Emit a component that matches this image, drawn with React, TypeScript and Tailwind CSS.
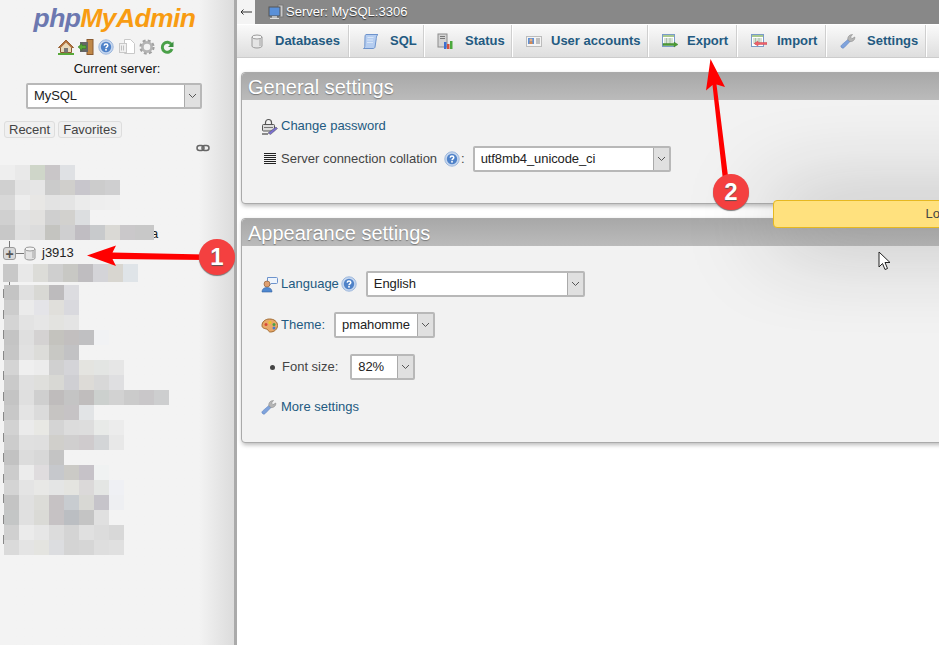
const topRows = [
  ["#eeeeee", "#e9e9e9", "#cfd6c9", "#c9c6c8", "#dfe1e4"],
  ["#d0d0d0", "#e4e4e4", "#e6e6e6", "#cbcbcb", "#d0cfcc", "#c8c6cc", "#cccccc", "#cfcfd0"],
  ["#d8d8d8", "#ededed", "#e8e7e5", "#e3e3e3", "#e4e4e4", "#ebebeb", "#eeeeee", "#efefef"],
  ["#d0d0d0", "#e2e2e2", "#e2e1df", "#cfcfcf", "#d2d1ce", "#dcdee0"],
  ["#c8c8c8", "#e0e0e0", "#dcdcdc", "#c4c4c0", "#cfcfd0", "#c0bdc2", "#c8cacc", "#dad9d5", "#cac8ca", "#c8c8c8"],
];

const midRow = ["#c8c8c8", "#e8e8e8", "#dcdcd8", "#cfcfcf", "#c8c8c4", "#bfbdc0", "#d4d4d8", "#d8d6d0", "#dfe4e8"];

const bottomRows = [
  ["#c4c4c4", "#e0e0e0", "#d8d8d4", "#bdbbbd", "#dcdce0"],
  ["#cccccc", "#ebebeb", "#e4e4e8", "#e0dfdb", "#d9d9de"],
  ["#d4d4d4", "#e3e3e3", "#e6e6e6", "#e3e3e0", "#e4e4e4"],
  ["#c4c4c4", "#dfdfdf", "#d4d2d2", "#c4c3be", "#c2bfbf", "#c0c0c2", "#f1f2f4"],
  ["#c6c6c6", "#e1e1e1", "#dcdcd9", "#c8c8c4", "#c2c2c4"],
  ["#d4d4d4", "#efefef", "#ececec", "#d0d0d0", "#d4d4d8", "#e4e4e0", "#e3e5e3", "#e6e6e6"],
  ["#cacaca", "#e0e0e0", "#dfdfdc", "#d8d8d4", "#cfcfd3", "#dddbd7", "#d8d8d8", "#dfdfe1"],
  ["#c4c4c4", "#dfdfdf", "#cfcfcf", "#bfbcbc", "#c4c4c4", "#c0bdbd", "#ccd0ce", "#d2d2d2", "#cbcbcb", "#c9c7c9", "#cdcecf"],
  ["#c8c8c8", "#e4e4e4", "#dbdbdb", "#c6c4c2", "#c6c3c5", "#e2e4e6"],
  ["#d2d2d2", "#ebebeb", "#e8e8e4", "#d4d4d4", "#dcdcdc", "#dddddd", "#e8eae8", "#ececec"],
  ["#cccccc", "#e0e0e0", "#dfdfdf", "#d0cfcb", "#d0cfcf", "#cfcbcd", "#d3d5d7", "#e8e8e8"],
  ["#c2c2c2", "#dcdcdc", "#d8d8d8", "#c4c4c4"],
  ["#cccccc", "#ececec", "#dfdcde", "#c6c8cc", "#cbcac6", "#c6c2c8", "#f0f2f2"],
  ["#d4d4d4", "#e4e4e4", "#e8e8e6", "#e4e5e5", "#e4e4e0", "#dbd9d9", "#e4e6e4", "#eff0f4"],
  ["#c4c4c4", "#e0e0e0", "#dcdcd8", "#c6c2c4", "#c8ccd0", "#d8d8d4", "#c6c4ca", "#eeeff2"],
  ["#c4c6c6", "#e0e0e0", "#dadad6", "#c6c2c4", "#bbbec2", "#c4c4c4", "#e0e0e0"],
  ["#d0d0d0", "#ebebeb", "#e6e6e6", "#dcdcdc", "#d4d4d4", "#e0e0e0", "#dcdcdc", "#d8d8d8"],
  ["#dadada", "#e4e4e4", "#e4e4e0", "#dcdde0", "#d4d4d4", "#d6d6d6", "#dedede", "#e0e0e0"],
];

const Mosaic = ({ colors, tall }: { colors: string[]; tall?: boolean }) => (
  <div className={tall ? "flex h-[18px]" : "flex h-[15px]"}>
    {colors.map((c, i) => (
      <div key={i} className="w-[15px] shrink-0" style={{ backgroundColor: c }} />
    ))}
  </div>
);

const DbIcon = () => (
  <svg width="16" height="16" viewBox="0 0 16 16">
    <path d="M3 4v9c0 1.2 2.2 2 5 2s5-.8 5-2V4z" fill="#e4e4e4" stroke="#9a9a9a" />
    <ellipse cx="8" cy="4" rx="5" ry="2" fill="#f4f4f4" stroke="#9a9a9a" />
    <rect x="10" y="6" width="2" height="7" fill="#c4c4c4" />
  </svg>
);

const HelpIcon = () => (
  <svg width="16" height="16" viewBox="0 0 16 16">
    <circle cx="8" cy="8" r="7.2" fill="#c5d6ee" stroke="#9db8dd" />
    <circle cx="8" cy="8" r="5.2" fill="#4f82c8" />
    <path d="M6.2 6.6C6.3 5.5 7 5 8 5s1.8.6 1.8 1.5C9.800 7.800 8 7.800 8 9.200" fill="none" stroke="#fff" strokeWidth="1.5" />
    <rect x="7.200" y="10" width="1.600" height="1.600" fill="#fff" />
  </svg>
);

const WrenchIcon = () => (
  <svg width="16" height="16" viewBox="0 0 16 16">
    <path d="M1.500 14.500c-1-1-.6-1.800.2-2.600L8.500 6l2 2-6.300 6.500c-.8.800-1.800.9-2.700 0z" fill="#7fa3dc" stroke="#5e83c0" strokeWidth=".6" />
    <path d="M8 7c-.8-2.500 1-5.500 4.500-5.500L10.500 4l1.500 1.700L14.800 4c.3 3.200-2.500 5-5 4.500z" fill="#b5b5b5" stroke="#8a8a8a" strokeWidth=".6" />
  </svg>
);

const TableIcon = ({ arrow, dir }: { arrow: string; dir: "in" | "out" }) => (
  <svg width="16" height="14" viewBox="0 0 16 14">
    <rect x="0.500" y="0.500" width="12" height="12" fill="#fff" stroke="#7a9cc8" />
    <rect x="1" y="1" width="11" height="2" fill="#a9c98e" />
    <path d="M2 5h9M2 7h9M2 9h9M4.500 4v7M8 4v7" stroke="#9fb9a0" strokeWidth=".8" />
    {dir === "out" ? (
      <path d="M1 9.500h11V8l4 2.500-4 2.500v-1.500H1z" fill="#4a9a35" stroke="#2f7a22" strokeWidth=".4" />
    ) : (
      <path d="M16 8.500H7V7L3 9.500 7 12v-1.500h9z" fill="#f0606a" stroke={arrow} strokeWidth=".4" />
    )}
  </svg>
);

const tabs = [
  {
    label: "Databases",
    w: "w-[113px]",
    gap: "gap-[10px]",
    pad: "pl-[11px]",
    icon: <DbIcon />,
  },
  {
    label: "SQL",
    w: "w-[75px]",
    gap: "gap-[11px]",
    pad: "pl-[12px]",
    icon: (
      <svg width="17" height="17" viewBox="0 0 17 17">
        <path d="M4 1.500h12c-1.500 1-1.500 2-1.700 4L13 14c-.3 1.200-1 1.500-2 1.500H1.500c1-.5 1.200-1.300 1.300-2.200L3 4c.1-1.500.3-2.200 1-2.500z" fill="#b5cdf0" stroke="#6d93cc" />
        <path d="M5.500 4.500h6M5 7h6M5 9.500h6" stroke="#d8e6f8" />
      </svg>
    ),
  },
  {
    label: "Status",
    w: "w-[88px]",
    gap: "gap-[11px]",
    pad: "pl-[12px]",
    icon: (
      <svg width="17" height="17" viewBox="0 0 17 17">
        <rect x="1" y="1" width="9" height="13" fill="#d4d4d4" stroke="#8c8c8c" />
        <path d="M3 3.500h5M3 5.500h5" stroke="#777" />
        <rect x="7" y="9" width="2.500" height="7" fill="#3c6fd0" />
        <rect x="10" y="11" width="2.500" height="5" fill="#d4503c" />
        <rect x="13" y="8" width="2.500" height="8" fill="#4ca83c" />
      </svg>
    ),
  },
  {
    label: "User accounts",
    w: "w-[136px]",
    gap: "gap-[9px]",
    pad: "pl-[12px]",
    icon: (
      <svg width="16" height="13" viewBox="0 0 16 13">
        <rect x="0.500" y="1.500" width="15" height="10" fill="#f4f4f4" stroke="#bcbcbc" />
        <rect x="2" y="3" width="6" height="6" fill="#5f92d8" />
        <circle cx="5" cy="5" r="1.500" fill="#e8b080" />
        <rect x="3.500" y="6.500" width="3" height="2.500" fill="#d88a50" />
        <path d="M10 4h4M10 6h4M10 8h4" stroke="#8a8a8a" />
      </svg>
    ),
  },
  {
    label: "Export",
    w: "w-[89px]",
    gap: "gap-[9px]",
    pad: "pl-[12px]",
    icon: <TableIcon arrow="#c04048" dir="out" />,
  },
  {
    label: "Import",
    w: "w-[89px]",
    gap: "gap-[10px]",
    pad: "pl-[12px]",
    icon: <TableIcon arrow="#c04048" dir="in" />,
  },
  {
    label: "Settings",
    w: "w-[100px]",
    gap: "gap-[11px]",
    pad: "pl-[12px]",
    icon: <WrenchIcon />,
  },
];

const Select = ({ value, w, h = "h-[26px]" }: { value: string; w: string; h?: string }) => (
  <div className={`${w} ${h} flex shrink-0 rounded-[2px] border-2 border-[#b8b8b8] bg-white`}>
    <span className="flex-1 pl-[6px] leading-[22px] tracking-[-0.1px] text-[#222]">{value}</span>
    <span className="flex w-[16px] items-center justify-center border-l border-[#aaa] bg-[#e0e0e0]">
      <svg width="9" height="6" viewBox="0 0 9 6">
        <path d="M1 1l3.500 3.500L8 1" fill="none" stroke="#555" strokeWidth="1" />
      </svg>
    </span>
  </div>
);

const Legend = ({ children }: { children: string }) => (
  <div className="h-[27px] rounded-t-[4px] bg-gradient-to-b from-[#a8a8a8] to-[#bbbbbb] pl-[6px] text-[20px] leading-[29px] text-white [text-shadow:0_1px_1px_#777]">
    {children}
  </div>
);

export default function App() {
  return (
    <div className="relative flex h-[645px] w-[939px] overflow-hidden bg-white font-['Liberation_Sans',Arial,sans-serif] text-[13px] text-[#444]">
      {/* navigation panel */}
      <div className="relative h-full w-[237px] shrink-0 border-r-[3px] border-[#aaaaaa] bg-gradient-to-r from-[#f3f3f3] from-[85%] to-[#dcdcdc]">
        <div className="h-[37px] pr-[5px] pt-[3px] text-center text-[26.5px] font-bold italic leading-[30px] tracking-[-0.6px]">
          <span className="text-[#6c78b0]">php</span>
          <span className="text-[#f89c12]">MyAdmin</span>
        </div>

        <div className="ml-[58px] flex h-[19px] items-center gap-[4px]">
          <svg width="16" height="16" viewBox="0 0 16 16">
            <path d="M8 1L0.500 8.500h2V13.500h11V8.500h2z" fill="#e8d8b8" stroke="#8a5a30" />
            <path d="M8 1L0.500 8.500h2.500L8 3.500l5 5h2.500z" fill="#b0703c" />
            <rect x="6" y="9" width="4" height="4.500" fill="#777" />
            <rect x="0" y="14" width="16" height="2" fill="#58a838" />
          </svg>
          <svg width="16" height="16" viewBox="0 0 16 16">
            <rect x="9" y="0.500" width="6" height="15" fill="#c08848" stroke="#8a5a30" />
            <rect x="2" y="3" width="8" height="10" fill="#666" />
            <path d="M0 8l4-3.500V6.500h4v3H4v2z" fill="#58a838" stroke="#2f7a22" strokeWidth=".5" />
          </svg>
          <HelpIcon />
          <svg width="16" height="16" viewBox="0 0 16 16" className="ml-[1px]">
            <path d="M5.500 .500h6l4 4v10h-10z" fill="#fff" stroke="#c8c8c8" />
            <rect x="0.500" y="4.500" width="7" height="9" fill="#f0f0f0" stroke="#c8c8c8" />
            <path d="M2.500 6.500v5M4.500 6.500v5" stroke="#c0c0c0" />
          </svg>
          <svg width="16" height="16" viewBox="0 0 16 16">
            <circle cx="8" cy="8" r="5.800" fill="none" stroke="#a0a0a0" strokeWidth="3.600" strokeDasharray="2.600 1.950" />
            <circle cx="8" cy="8" r="4.600" fill="none" stroke="#b4b4b4" strokeWidth="2.600" />
          </svg>
          <svg width="14" height="16" viewBox="0 0 14 16" className="ml-[1px]">
            <path d="M11.500 5.500A5 5 0 1 0 12 10" fill="none" stroke="#4aa048" strokeWidth="3" />
            <path d="M13.500 2.500v5.500H8z" fill="#3c9040" />
          </svg>
        </div>

        <div className="mt-[5px] h-[16px] text-center leading-[16px] text-[#111]">Current server:</div>
        <div className="ml-[26px] mt-[6px]">
          <Select value="MySQL" w="w-[176px]" />
        </div>

        <div className="ml-[4px] mt-[12px] flex gap-[3px] text-[#444]">
          <span className="h-[17px] rounded-[3px] border border-[#dddddd] bg-[#f0f0f0] px-[4px] leading-[16px]">Recent</span>
          <span className="h-[17px] rounded-[3px] border border-[#dddddd] bg-[#f0f0f0] px-[4px] leading-[16px]">Favorites</span>
        </div>

        <div className="ml-[196px] mt-[6px] h-[21px]">
          <svg width="14" height="8" viewBox="0 0 14 8">
            <rect x="1" y="1.500" width="7" height="5" rx="2.500" fill="none" stroke="#666" strokeWidth="1.500" />
            <rect x="6" y="1.500" width="7" height="5" rx="2.500" fill="none" stroke="#666" strokeWidth="1.500" />
          </svg>
        </div>

        {/* blurred database tree */}
        <div className="relative">
          {topRows.map((r, i) => (
            <Mosaic key={i} colors={r} />
          ))}
          <span className="absolute left-[151px] top-[59px] text-[#222]">a</span>
          <div className="absolute left-[150px] top-[60px] h-[15px] w-[4px] bg-[#c8c8c8]" />
        </div>

        <div className="relative h-[24px]">
          <div className="absolute left-[9px] top-[1px] h-[6px] w-px bg-[#777]" />
          <div className="absolute left-[3px] top-[7px] flex h-[13px] w-[13px] items-center justify-center rounded-[3px] border border-[#999] bg-[#d8d8d8] text-[14px] font-bold leading-none text-[#555]">
            +
          </div>
          <div className="absolute left-[16px] top-[13px] h-px w-[8px] bg-[#777]" />
          <div className="absolute left-[22px] top-[5px] flex items-center gap-[4px]">
            <DbIcon />
            <span className="text-[13px] leading-[16px] text-[#222]">j3913</span>
          </div>
        </div>

        <div className="ml-[3px]">
          <Mosaic colors={midRow} tall />
        </div>
        <div className="ml-[9px] h-[3px] w-px bg-[#777]" />

        <div className="relative ml-[4px]">
          <div className="absolute left-[-1px] top-[4px] h-[265px] w-px bg-[repeating-linear-gradient(to_bottom,#888_0,#888_9px,transparent_9px,transparent_20.500px)]" />
          {bottomRows.map((r, i) => (
            <Mosaic key={i} colors={r} />
          ))}
        </div>
      </div>

      {/* main */}
      <div className="min-w-0 flex-1">
        <div className="flex h-[24px] items-center bg-[#888888] text-white">
          <div className="flex h-[24px] w-[18px] items-center justify-center bg-[#f4f4f4] text-[#333]">
            <svg width="12" height="6" viewBox="0 0 12 6">
              <path d="M12 3H1M3.500 .500L1 3l2.500 2.500" fill="none" stroke="#333" />
            </svg>
          </div>
          <svg width="16" height="16" viewBox="0 0 16 16" className="ml-[13px]">
            <rect x="10" y="1" width="5" height="12" fill="#c8c8c8" stroke="#777" />
            <rect x="1" y="3" width="11" height="9" fill="#5a90d8" stroke="#555" />
            <rect x="4" y="12" width="5" height="2" fill="#bbb" />
            <rect x="2" y="14" width="9" height="1" fill="#ddd" />
          </svg>
          <span className="ml-[2px] [text-shadow:0_1px_1px_#333]">Server: MySQL:3306</span>
        </div>

        <div className="mt-px flex h-[33px] border-b border-[#cccccc] bg-gradient-to-b from-[#fafafa] to-[#dedede]">
          {tabs.map((t) => (
            <div
              key={t.label}
              className={`${t.w} ${t.gap} ${t.pad} flex shrink-0 items-center border-r border-r-white text-[13px] font-bold text-[#235a81] shadow-[inset_-1px_0_0_#cfcfcf]`}
            >
              <span className="flex w-[17px] shrink-0 justify-center">{t.icon}</span>
              <span>{t.label}</span>
            </div>
          ))}
        </div>

        <div className="ml-[4px] mt-[14px] h-[132px] w-[720px] rounded-[4px] border border-[#aaaaaa] bg-[#f2f2f2] shadow-[1px_2px_4px_#bbb]">
          <Legend>General settings</Legend>
          <div className="pl-[19px]">
            <div className="mt-[18px] flex h-[16px] items-center text-[#235a81]">
              <svg width="17" height="17" viewBox="0 0 17 17" className="mr-[3px]">
                <path d="M4.500 6.500V4.500a3 3 0 0 1 6 0v2" fill="none" stroke="#555" strokeWidth="1.200" />
                <rect x="1.500" y="6.500" width="12" height="6.500" rx="1" fill="#ddd" stroke="#555" />
                <path d="M3 9.500h9" stroke="#777" />
                <path d="M7 15l8-6 1.500 1.500-7 6z" fill="#7a6fd0" stroke="#555" strokeWidth=".5" />
                <path d="M1 16h6" stroke="#222" />
              </svg>
              <span>Change password</span>
            </div>
            <div className="mt-[12px] flex h-[26px] items-center">
              <svg width="14" height="12" viewBox="0 0 14 12" className="ml-[2px] mr-[4px]">
                <path d="M1 .500h12M1 2.500h12M1 4.500h12M1 6.500h12M1 8.500h12M1 10.500h12" stroke="#222" />
              </svg>
              <span>Server connection collation</span>
              <span className="ml-[7px] mr-[1px]">
                <HelpIcon />
              </span>
              <span>:</span>
              <span className="ml-[8px]">
                <Select value="utf8mb4_unicode_ci" w="w-[198px]" />
              </span>
            </div>
          </div>
        </div>

        <div className="ml-[4px] mt-[14px] h-[225px] w-[720px] rounded-[4px] border border-[#aaaaaa] bg-[#f2f2f2] shadow-[1px_2px_4px_#bbb]">
          <Legend>Appearance settings</Legend>
          <div className="pl-[19px]">
            <div className="mt-[25px] flex h-[26px] items-center">
              <svg width="17" height="17" viewBox="0 0 17 17" className="mr-[3px]">
                <path d="M6.500 1.500h9a1 1 0 0 1 1 1v4a1 1 0 0 1-1 1H10L8 10V7.500H6.500z" fill="#eef4fc" stroke="#6d93cc" />
                <circle cx="6" cy="8" r="3" fill="#e0a070" stroke="#80502a" strokeWidth=".6" />
                <path d="M1 16c0-3 2-4.500 5-4.500s5 1.500 5 4.500z" fill="#4f88d0" stroke="#2f5ea0" strokeWidth=".6" />
              </svg>
              <span className="text-[#235a81]">Language</span>
              <span className="ml-[2px]">
                <HelpIcon />
              </span>
              <span className="ml-[9px]">
                <Select value="English" w="w-[219px]" />
              </span>
            </div>
            <div className="mt-[15px] flex h-[26px] items-center">
              <svg width="17" height="15" viewBox="0 0 17 15" className="mr-[3px]">
                <path d="M8.500 1C13 1 16.500 3.500 16.500 7.500S13 14 9.500 14c-2 0-2-1.500-3-2.500S1 11 1 7.500 4 1 8.500 1z" fill="#e8a868" stroke="#a06a30" />
                <circle cx="5" cy="6.500" r="1.500" fill="#d84838" />
                <circle cx="9" cy="4.500" r="1.500" fill="#e8c828" />
                <circle cx="13" cy="6.500" r="1.500" fill="#48a048" />
                <circle cx="13" cy="10" r="1.500" fill="#4878d0" />
              </svg>
              <span className="text-[#235a81]">Theme:</span>
              <span className="ml-[9px]">
                <Select value="pmahomme" w="w-[101px]" />
              </span>
            </div>
            <div className="mt-[16px] flex h-[26px] items-center">
              <span className="ml-[9px] mr-[7px] h-[5px] w-[5px] rounded-full bg-[#444]" />
              <span>Font size:</span>
              <span className="ml-[12px]">
                <Select value="82%" w="w-[65px]" />
              </span>
            </div>
            <div className="mt-[19px] flex h-[16px] items-center text-[#235a81]">
              <span className="mr-[4px]">
                <WrenchIcon />
              </span>
              <span>More settings</span>
            </div>
          </div>
        </div>
      </div>

      {/* loading notification */}
      <div className="absolute left-[773px] top-[200px] h-[28px] w-[350px] rounded-[4px] border border-[#e6b820] bg-[#ffe17e] pl-[12px] text-center leading-[26px] text-[#444] shadow-[0_5px_90px_#888]">
        Loading...
      </div>

      {/* cursor */}
      <svg width="14" height="21" viewBox="0 0 14 21" className="absolute left-[878px] top-[251px]">
        <path d="M1 1v15l3.500-3.500 2.500 6 2.500-1-2.500-6H12z" fill="#fff" stroke="#222" />
      </svg>

      {/* annotation arrows */}
      <svg width="939" height="645" viewBox="0 0 939 645" className="pointer-events-none absolute left-0 top-0">
        <path d="M87 255.500L116 245.500 112.500 252.500 205 254.500 205 260 112.500 259 116 266z" fill="#ff0000" />
        <path d="M710.500 59L725 87 716.500 84.500 728 176 722.500 176 712.500 85 706 90.500z" fill="#ff0000" />
      </svg>
      <div className="absolute left-[199px] top-[239px] flex h-[36px] w-[36px] items-center justify-center rounded-full bg-[#f44040] text-[24px] font-bold text-white shadow-[0_1px_1px_#777] [text-shadow:0_1px_1px_#555]">
        1
      </div>
      <div className="absolute left-[713px] top-[174px] flex h-[36px] w-[36px] items-center justify-center rounded-full bg-[#f44040] text-[24px] font-bold text-white shadow-[0_1px_1px_#777] [text-shadow:0_1px_1px_#555]">
        2
      </div>
    </div>
  );
}
